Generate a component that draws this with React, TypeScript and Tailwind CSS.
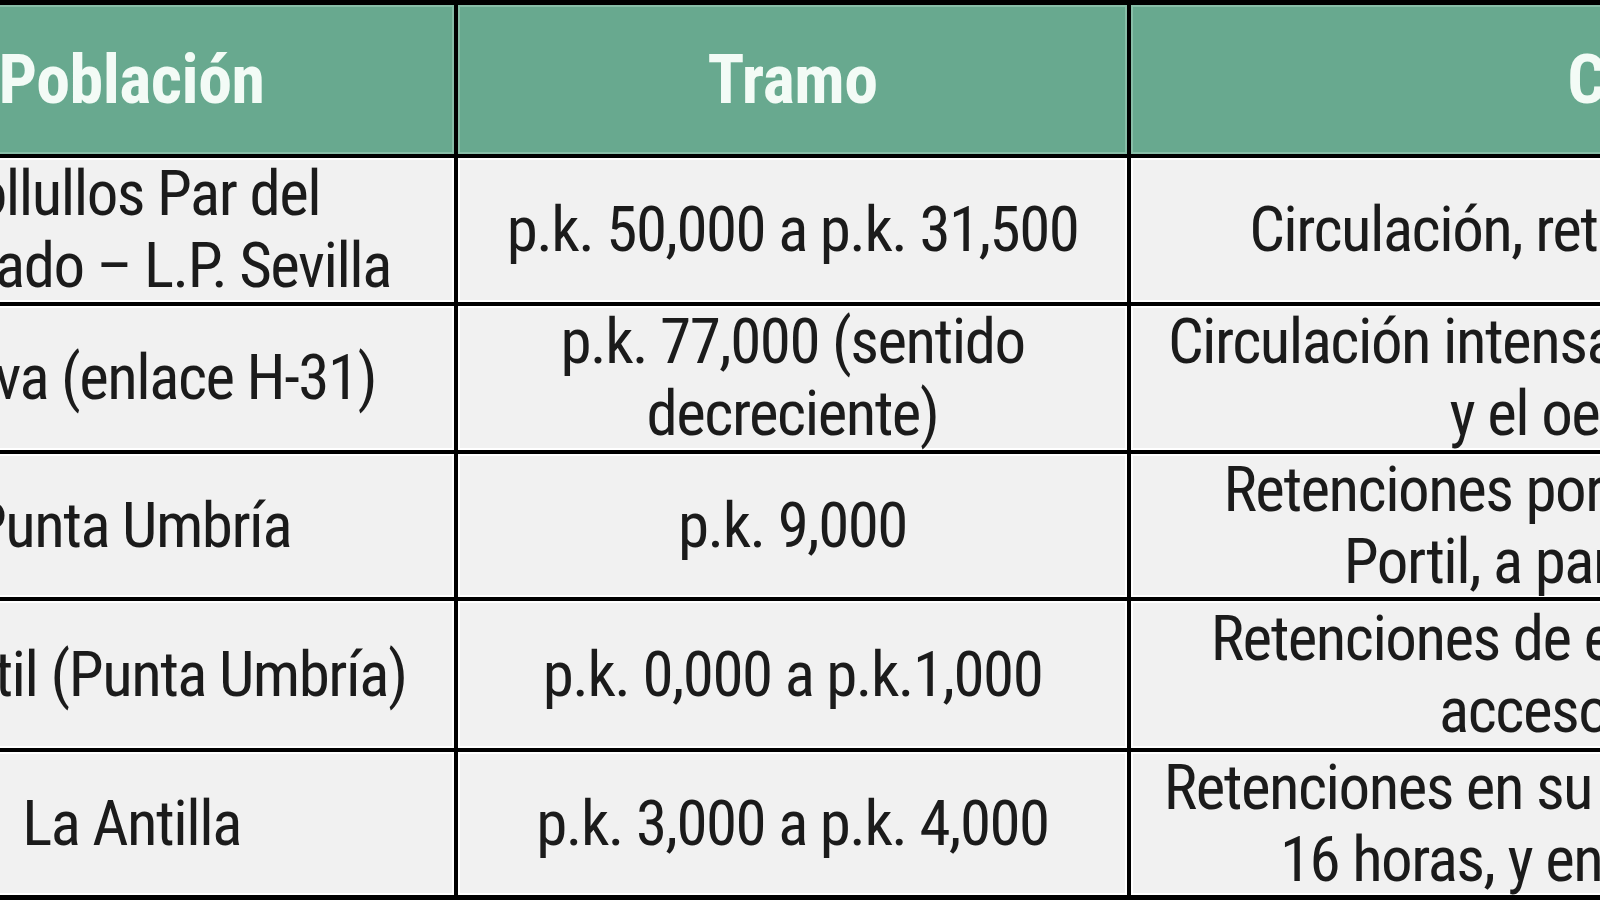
const rows: string[][][] = [
  [
    ['Bollullos Par del', 'Condado – L.P. Sevilla'],
    ['p.k. 50,000 a p.k. 31,500'],
    ['Circulación, retenciones en horas de la tarde'],
  ],
  [
    ['Huelva (enlace H-31)'],
    ['p.k. 77,000 (sentido', 'decreciente)'],
    ['Circulación intensa en los accesos a Huelva capital', 'y el oeste de esta provincia'],
  ],
  [
    ['Punta Umbría'],
    ['p.k. 9,000'],
    ['Retenciones por acceso a la playa y zona de El', 'Portil, a partir de las 12 horas aprox.'],
  ],
  [
    ['El Portil (Punta Umbría)'],
    ['p.k. 0,000 a p.k.1,000'],
    ['Retenciones de entrada y salida en los distintos', 'accesos a la zona de playas'],
  ],
  [
    ['La Antilla'],
    ['p.k. 3,000 a p.k. 4,000'],
    ['Retenciones en su acceso de entrada a partir de las', '16 horas, y en la salida hasta las 21 horas'],
  ],
];

const headers = ['Población', 'Tramo', 'Circunstancias'];

export default function App() {
  return (
    <div className="w-[1600px] h-[900px] overflow-hidden bg-black font-['Roboto',sans-serif] font-stretch-condensed">
      <div className="ml-[-191px] pt-[5px] grid w-max grid-cols-[645px_669px_1270px] grid-rows-[149px_144px_144px_143px_147px_143px] gap-[4px] bg-black">
        {headers.map((h) => (
          <div
            key={h}
            className="flex items-center justify-center border-2 border-[#88bea8] bg-[#68a98f] text-[68px] font-bold tracking-[-0.5px] text-[#f3fbf6]"
          >
            {h}
          </div>
        ))}
        {rows.map((row, i) =>
          row.map((cell, j) => (
            <div
              key={i + '-' + j}
              className="flex flex-col items-center justify-center border-2 border-white bg-[#f1f1f1] text-center text-[63px] leading-[72px] tracking-[-1.5px] whitespace-nowrap text-[#1b1b1b]"
            >
              {cell.map((line, k) => (
                <span key={k}>{line}</span>
              ))}
            </div>
          ))
        )}
      </div>
    </div>
  );
}
